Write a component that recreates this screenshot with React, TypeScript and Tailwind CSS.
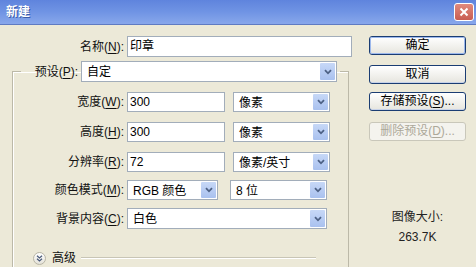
import React from "react";

const font = "font-['Liberation_Sans','Noto_Sans_CJK_SC',sans-serif]";

function Chevron() {
  return (
    <svg width="8" height="6" viewBox="0 0 8 6">
      <path d="M1 1.2 L4 4.3 L7 1.2" fill="none" stroke="#4d6185" strokeWidth="1.8" />
    </svg>
  );
}

function Label({ text, k, w }: { text: string; k: string; w: string }) {
  return (
    <span className={`${w} shrink-0 text-right text-[12px] leading-[20px] text-[#111]`}>
      {text}(<u className="underline-offset-2">{k}</u>):
    </span>
  );
}

function Field({ value, w }: { value: string; w: string }) {
  return (
    <div className={`${w} h-[20px] shrink-0 border border-[#a2adba] bg-white pl-[2px] text-[12px] leading-[18px]`}>
      {value}
    </div>
  );
}

function Select({ value, w, h = "h-[20px]" }: { value: string; w: string; h?: string }) {
  return (
    <div className={`${w} ${h} shrink-0 flex items-stretch border border-[#a2adba] bg-white p-px`}>
      <span className="flex-1 pl-[4px] text-[12px] leading-[18px] text-black whitespace-nowrap">{value}</span>
      <span className="w-[15px] flex items-center justify-center rounded-[1px] bg-gradient-to-b from-[#c7d8f7] to-[#a9c1ef]">
        <Chevron />
      </span>
    </div>
  );
}

function Button({
  children,
  disabled,
  mt,
}: {
  children: React.ReactNode;
  disabled?: boolean;
  mt: string;
}) {
  return (
    <div
      className={`${mt} h-[19px] w-[97px] rounded-[3px] border text-center text-[12px] leading-[17px] ${
        disabled
          ? "border-[#c9c7ba] bg-[#f4f3ee] text-[#aca899]"
          : "border-[#1b3d73] bg-gradient-to-b from-[#ffffff] to-[#e6e5de] text-black shadow-[inset_0_-1px_0_#c7d2e8]"
      }`}
    >
      {children}
    </div>
  );
}

export default function App() {
  return (
    <div className={`w-[476px] h-[267px] overflow-hidden bg-[#ece9d8] flex flex-col ${font}`}>
      {/* Title bar */}
      <div className="h-[25px] shrink-0 flex items-center justify-between pl-[6px] pr-[2px] bg-gradient-to-b from-[#5f84dd] via-[#7094e4] to-[#88a7eb] border-b border-[#5f7bc2]">
        <span className="text-[12px] font-bold text-white leading-none [text-shadow:1px_1px_0_#3a5aa8]">新建</span>
        <div className="w-[20px] h-[18px] rounded-[3px] border border-white bg-gradient-to-b from-[#e08a7e] to-[#c85d52] flex items-center justify-center">
          <svg width="10" height="10" viewBox="0 0 10 10">
            <path d="M1.5 1.5 L8.5 8.5 M8.5 1.5 L1.5 8.5" stroke="white" strokeWidth="2" />
          </svg>
        </div>
      </div>

      <div className="flex">
        {/* Left */}
        <div className="w-[352px] shrink-0 flex flex-col">
          <div className="mt-[11px] flex items-center gap-[3px]">
            <Label text="名称" k="N" w="w-[124px]" />
            <div className="w-[225px] h-[21px] border border-[#a2adba] bg-white pl-[2px] text-[12px] leading-[19px]">印章</div>
          </div>

          <fieldset className="ml-[12px] mt-[4px] w-[337px] h-[300px] border border-[#bcb9a8] shadow-[inset_1px_1px_0_#ffffff]">
            <legend className="ml-[8px] pr-[3px]">
              <div className="flex items-center gap-[3px]">
                <Label text="预设" k="P" w="w-[57px]" />
                <Select value="自定" w="w-[256px]" h="h-[21px]" />
              </div>
            </legend>

            <div className="mt-[10px] flex items-center gap-[3px]">
              <Label text="宽度" k="W" w="w-[111px]" />
              <Field value="300" w="w-[98px]" />
              <div className="w-[2px]" />
              <Select value="像素" w="w-[97px]" />
            </div>
            <div className="mt-[10px] flex items-center gap-[3px]">
              <Label text="高度" k="H" w="w-[111px]" />
              <Field value="300" w="w-[98px]" />
              <div className="w-[2px]" />
              <Select value="像素" w="w-[97px]" />
            </div>
            <div className="mt-[10px] flex items-center gap-[3px]">
              <Label text="分辨率" k="R" w="w-[111px]" />
              <Field value="72" w="w-[98px]" />
              <div className="w-[2px]" />
              <Select value="像素/英寸" w="w-[97px]" />
            </div>
            <div className="mt-[8px] flex items-center gap-[3px]">
              <Label text="颜色模式" k="M" w="w-[111px]" />
              <Select value="RGB 颜色" w="w-[91px]" />
              <div className="w-[6px]" />
              <Select value="8 位" w="w-[97px]" />
            </div>
            <div className="mt-[8px] flex items-center gap-[3px]">
              <Label text="背景内容" k="C" w="w-[111px]" />
              <Select value="白色" w="w-[200px]" h="h-[21px]" />
            </div>

            <div className="mt-[22px] ml-[20px] flex items-center">
              <span className="w-[13px] h-[13px] rounded-full border border-[#b8b5a6] bg-gradient-to-b from-white to-[#e4e2d8] flex items-center justify-center">
                <svg width="7" height="7" viewBox="0 0 7 7">
                  <path d="M1 0.8 L3.5 3 L6 0.8 M1 3.8 L3.5 6 L6 3.8" fill="none" stroke="#4a5a7a" strokeWidth="1.2" />
                </svg>
              </span>
              <span className="ml-[6px] text-[12px] leading-[14px] text-[#111]">高级</span>
              <span className="ml-[5px] w-[235px] h-[2px] border-t border-[#c8c5b5] border-b border-b-white" />
            </div>
          </fieldset>
        </div>

        {/* Right */}
        <div className="ml-[17px] flex flex-col">
          <Button mt="mt-[11px]">
            <span className="block h-full rounded-[2px] shadow-[inset_0_0_0_1px_#9cb8ec]">确定</span>
          </Button>
          <Button mt="mt-[10px]">取消</Button>
          <Button mt="mt-[8px]">
            存储预设(<u className="underline-offset-2">S</u>)...
          </Button>
          <Button mt="mt-[11px]" disabled>
            删除预设(<u className="underline-offset-2">D</u>)...
          </Button>
          <div className="mt-[66px] text-center text-[12px] leading-[20px] text-[#222]">
            <div>图像大小:</div>
            <div>263.7K</div>
          </div>
        </div>
      </div>
    </div>
  );
}
